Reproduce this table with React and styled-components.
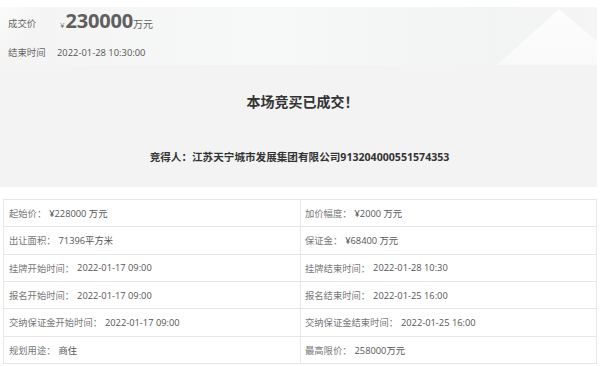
import React from 'react';
import styled, { createGlobalStyle } from 'styled-components';

const GlobalStyle = createGlobalStyle`
  html, body {
    margin: 0;
    padding: 0;
    background: #fff;
  }
  body {
    font-family: "Open Sans", "Noto Sans CJK SC", sans-serif;
    color: #555;
  }
`;

const Page = styled.div`
  width: 597px;
  padding-top: 7px;
`;

const Banner = styled.div`
  position: relative;
  height: 58px;
  padding-left: 8px;
  display: flex;
  flex-direction: column;
  overflow: hidden;
  background: linear-gradient(90deg, #f4f4f4 0%, #f7f8f8 45%, #f2f3f3 82%, #f5f5f5 100%);

  &::before {
    content: '';
    position: absolute;
    left: 0;
    top: 0;
    width: 40px;
    height: 58px;
    background: linear-gradient(135deg, #fbfbfb 0%, rgba(250, 250, 250, 0) 60%);
  }

  &::after {
    content: '';
    position: absolute;
    right: 0;
    top: 0;
    width: 100px;
    height: 58px;
    background: linear-gradient(180deg, #fdfdfd, #f9f9f9);
    clip-path: polygon(62% 4%, 100% 58%, 100% 100%, 0 100%);
  }
`;

const BannerRow = styled.div`
  position: relative;
  z-index: 1;
  display: flex;
  align-items: center;
  height: ${({ $h }) => $h}px;
`;

const BannerLabel = styled.span`
  width: 49px;
  font-size: 9.4px;
  color: #666;
`;

const BannerValue = styled.span`
  font-size: 9.4px;
  color: #555;
`;

const Price = styled.div`
  display: flex;
  align-items: baseline;
  padding-left: 3px;
  margin-bottom: 5px;
  color: #5f5f5f;
`;

const Yen = styled.span`
  font-size: 8px;
  margin-right: 1px;
`;

const BigNumber = styled.span`
  font-size: 20px;
  font-weight: 700;
  line-height: 24px;
  letter-spacing: -0.2px;
`;

const Unit = styled.span`
  font-size: 10px;
`;

const ResultBox = styled.div`
  height: 122px;
  box-sizing: border-box;
  padding-top: 27px;
  background: #f3f3f3;
  display: flex;
  flex-direction: column;
  align-items: center;
  color: #333;
  font-weight: 700;
`;

const Title = styled.div`
  font-size: 14px;
  line-height: 20px;
  margin-left: 8px;
`;

const Winner = styled.div`
  margin-top: 37px;
  font-size: 10.6px;
  line-height: 16px;
  margin-left: 2px;
`;

const Table = styled.div`
  margin: 12px 0 0 3px;
  width: 594px;
  box-sizing: border-box;
  border: 1px solid #e6e6e6;
  border-bottom: none;
  display: grid;
  grid-template-columns: 297px 1fr;
`;

const Cell = styled.div`
  height: 26.33px;
  border-bottom: 1px solid #e6e6e6;
  border-right: ${({ $left }) => ($left ? '1px solid #e6e6e6' : 'none')};
  display: flex;
  align-items: center;
  padding-left: ${({ $left }) => ($left ? '5px' : '4px')};
  font-size: 9.3px;
  white-space: nowrap;
`;

const CellLabel = styled.span`
  color: #777;
  margin-right: 3px;
`;

const CellValue = styled.span`
  color: #555;
`;

const rows = [
  ['起始价：', '¥228000 万元', '加价幅度：', '¥2000 万元'],
  ['出让面积：', '71396平方米', '保证金：', '¥68400 万元'],
  ['挂牌开始时间：', '2022-01-17 09:00', '挂牌结束时间：', '2022-01-28 10:30'],
  ['报名开始时间：', '2022-01-17 09:00', '报名结束时间：', '2022-01-25 16:00'],
  ['交纳保证金开始时间：', '2022-01-17 09:00', '交纳保证金结束时间：', '2022-01-25 16:00'],
  ['规划用途：', '商住', '最高限价：', '258000万元'],
];

export default function App() {
  return (
    <Page>
      <GlobalStyle />
      <Banner>
        <BannerRow $h={32}>
          <BannerLabel>成交价</BannerLabel>
          <Price>
            <Yen>¥</Yen>
            <BigNumber>230000</BigNumber>
            <Unit>万元</Unit>
          </Price>
        </BannerRow>
        <BannerRow $h={26}>
          <BannerLabel>结束时间</BannerLabel>
          <BannerValue>2022-01-28 10:30:00</BannerValue>
        </BannerRow>
      </Banner>
      <ResultBox>
        <Title>本场竞买已成交！</Title>
        <Winner>竞得人：江苏天宁城市发展集团有限公司913204000551574353</Winner>
      </ResultBox>
      <Table>
        {rows.map((r) => (
          <React.Fragment key={r[0]}>
            <Cell $left>
              <CellLabel>{r[0]}</CellLabel>
              <CellValue>{r[1]}</CellValue>
            </Cell>
            <Cell>
              <CellLabel>{r[2]}</CellLabel>
              <CellValue>{r[3]}</CellValue>
            </Cell>
          </React.Fragment>
        ))}
      </Table>
    </Page>
  );
}
